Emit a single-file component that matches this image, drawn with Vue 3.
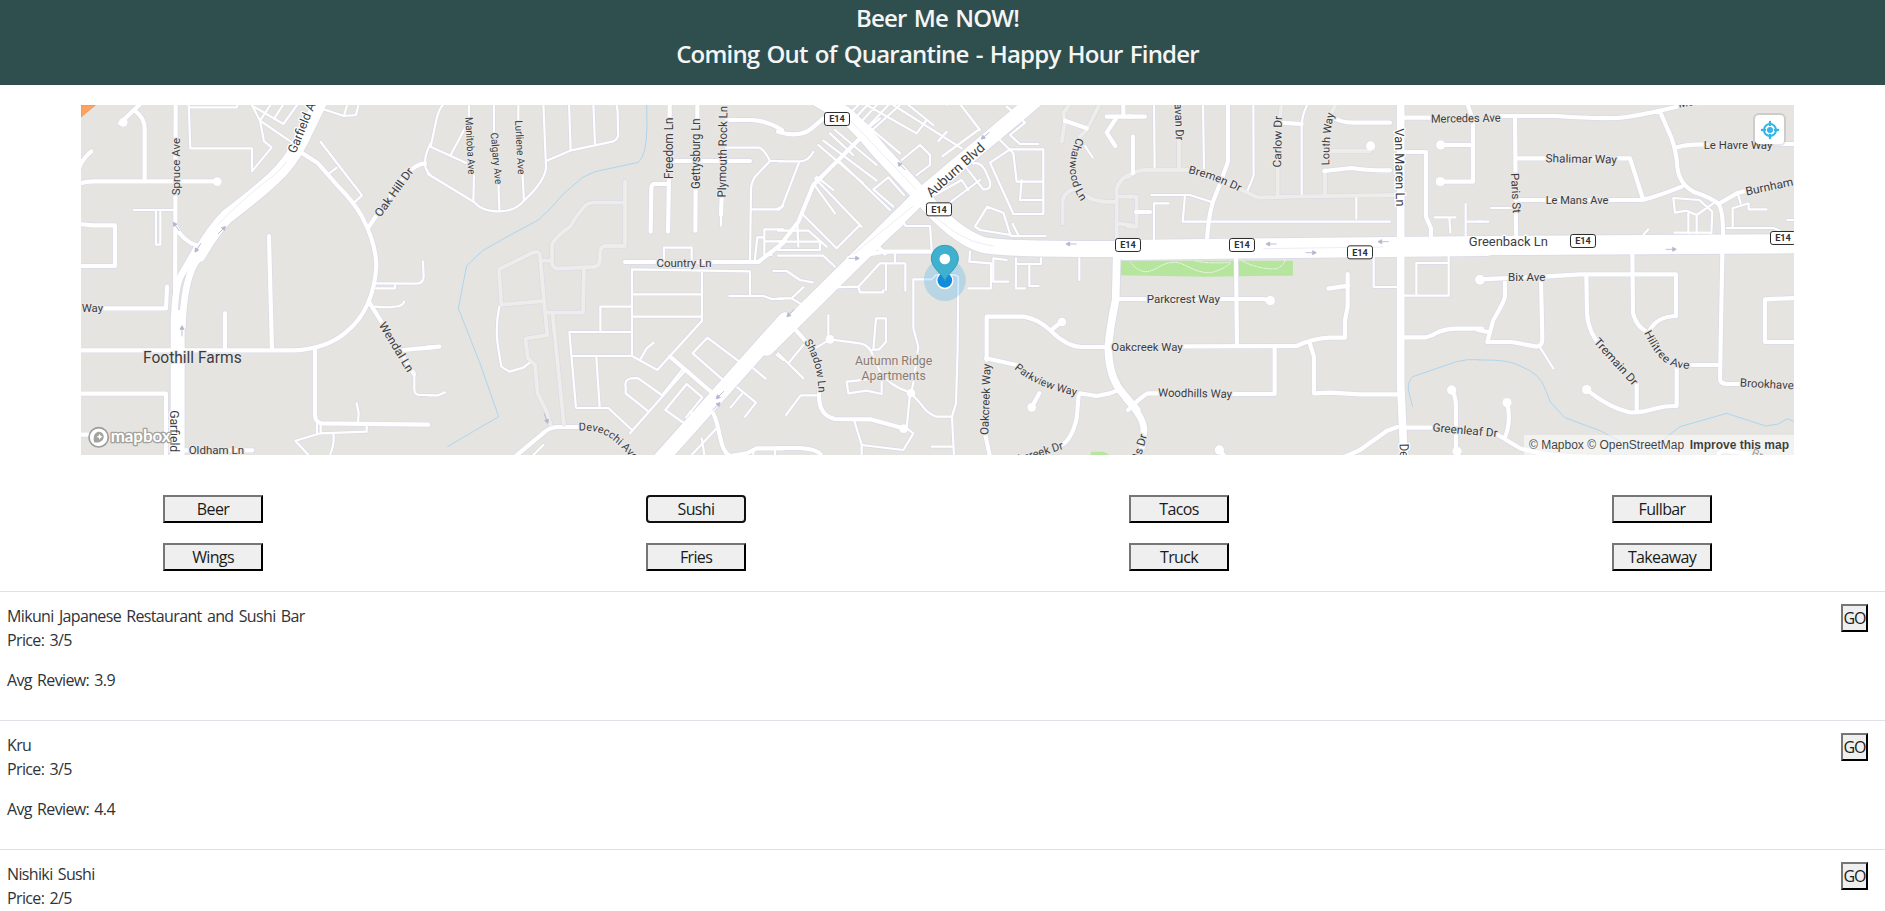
<script setup>
// Each map tile is 350px wide and drawn in a local space of 3 units per pixel.
// Road kinds: p = service lane, s = street, t = private road.
const tiles = [
  {
    roads: [
      ['s', 'M120 70 L185 8 M165 32 Q194 55 194 85 V244 M-6 252 Q15 245 40 244 H412 M-6 215 Q2 180 34 154 M-6 372 L40 376 H105 V498 H-6 M68 625 H258 L261 560 M-6 751 H640 Q740 748 800 695 Q880 630 889 500 Q889 430 846 350 Q820 305 780 265 L712 188 L660 155 M435 751 V640 M576 751 L567 408 M705 748 V945 Q706 968 725 970 L1045 974 M-6 881 H258 V1068 M865 382 Q900 330 950 260 Q1000 190 1035 191 M866 604 L1002 822 M970 750 L1056 742 M-6 1004 H60 M315 1051 H517'],
      ['s', 'M287 8 L285 700'],
      ['p', 'M161 330 H284 M228 330 V434 H241 V332 M326 10 L331 145 H516 V214 L575 142 L552 124 L540 62 L515 14 M326 22 H470 L474 10 M540 62 L640 130 M540 62 L572 14 M522 20 L610 72 L652 14 M585 52 L612 10 M730 28 L792 48 L828 45 L836 12 M792 48 L802 12 M722 126 L846 286 L820 310 M745 222 L770 203 M888 550 L1010 551 Q1030 550 1031 530 L1029 485 M888 565 H945 V552 M885 620 Q970 627 972 605 M1003 822 V870 Q1004 885 1020 885 H1056 M834 966 L836 940 L830 910 M711 970 V998 M722 972 V998 M1035 190 Q1034 165 1052 130 M1035 190 Q1036 212 1052 226 M690 1070 L646 1022 L722 1000 L860 995 V975 M760 1000 Q765 1030 748 1070'],
      ['s', 'M287 380 Q310 425 352 437'],
    ],
    wide: [
      [42, 'M293 1070 V650'],
      [20, 'M283 660 Q285 545 310 515 L350 445 M307 680 Q312 545 345 490 L380 440'],
      [42, 'M357 465 Q400 390 440 350 Q520 290 580 235 Q630 190 665 120 L728 -10'],
      [4, 'M293 751 V740'],
    ],
    dots: [[130, 67, 13], [412, 245, 13]],
    arrows: [[425, 391, -45], [354, 443, 125], [289, 380, -125], [306, 693, -90]],
  },
  {
    roads: [
      ['p', 'M45 8 Q25 25 18 65 L2 140 L110 190 M62 165 L115 65 M117 8 V60 M132 225 L130 306 M192 8 V100 M205 240 L208 333 M265 8 V60 M277 215 L282 302 M-6 222 L132 306 Q155 333 200 334 Q255 336 282 302 Q348 240 348 200 L340 8 M350 182 L420 152 L550 124 Q568 115 564 95 L563 35 Q560 20 560 8 M417 8 L422 152 M490 8 L495 134'],
      ['s', 'M719 8 V60 M717 230 L714 395 M802 8 V60 M797 260 L796 392 M875 290 L873 345 M717 252 H672 Q664 252 664 270 L662 395 M725 183 H960 M585 486 H985 L1060 428 M890 60 H965 Q1010 62 1056 90'],
      ['p', 'M873 340 V377 M888 143 H985 Q1000 143 1020 183 H1060 M1020 183 L975 230 Q963 250 963 270 L960 486 M962 328 H1040 L1060 318 M974 486 L982 412 H1003 V388 H1060 M1003 390 V470 M1003 424 H1060 M1003 465 H1025 M702 486 V443 H785 V486 M606 768 V508 L960 514 V588 M816 512 V662 L682 810 L606 768 H424 M606 583 H816 M606 650 H816 M606 620 H511 V696 M606 696 H418 L438 924 H535 L606 990 M499 772 L509 922 M630 780 L650 745 L671 728 M898 588 H1000 L1025 597 H1060 M1030 513 H1060 M600 1000 L765 812 M695 885 L625 835 Q580 830 587 860 V880 L656 935 M700 880 L760 805 M770 975 L706 930 L770 852 L817 892 L768 952 M780 935 L800 950 M885 845 L788 760 L832 713 L935 790 M970 805 L1007 836 M922 862 L978 908 L945 950 M937 880 L902 922 M1040 765 L1060 780 M208 620 Q195 680 204 740 L214 800 L238 815 L280 803 L300 787 M-6 886 H25 L45 877 M340 1035 L305 1070 M780 1070 L860 985 M815 1015 L824 1070 M1035 1050 V1070 M970 1050 V1070'],
      ['s', 'M720 770 L858 888 M850 940 Q860 960 870 1010 Q880 1060 900 1068 L950 1060 L980 1045 H1060 M-6 743 L28 740 M255 1070 L345 995 Q360 981 390 981 H450'],
      ['t', 'M585 245 V438 H525 Q512 440 510 455 V480 Q508 500 490 501 L380 506 Q366 500 366 485 V435 Q372 415 420 380 Q440 345 465 318 Q475 308 490 308 H585 M330 482 H362 M214 614 L207 508 L310 457 Q328 452 330 465 L342 605 L352 705 L286 716 L294 775 L315 795 L323 880 L350 935 L362 975 M214 614 L340 603 M462 505 L459 638 H352 M368 645 L402 975'],
    ],
    wide: [[46, 'M690 1080 L1066 660']],
    dots: [],
    arrows: [[348, 955, 70], [870, 885, 135], [859, 919, -45]],
  },
  {
    roads: [
      ['p', 'M-6 184 H60 Q85 184 100 155 M56 190 L10 310 Q5 325 -6 330 M235 120 L100 255 M150 100 L220 165 M165 90 L290 195 M115 135 L250 250 M130 122 L290 242 M105 235 L245 380 M180 185 L330 330 M100 250 L165 340 M70 345 L170 445 L240 375 M160 270 L110 230 M280 268 L325 232 L372 285 M280 268 L340 320 M-6 392 H85 L140 440 M55 440 L52 370 M-6 425 H120 V450 H-6 M-6 467 H130 L165 500 M-6 513 H20 L60 540 L98 547 M-6 595 H35 L70 562 M35 595 L60 610 M130 563 L235 560 L300 490 H376 V572 M235 560 L240 577 H310 V570 M318 490 V570 M165 535 L190 530 L245 475 M345 462 V486 M365 362 L378 378 H450 L455 450 M300 385 L332 405 L370 370'],
      ['p', 'M235 15 L205 45 M262 15 L220 60 M290 15 L235 75 M325 15 L255 90 M360 15 L260 105 M225 45 L360 160 M260 15 L410 100 L440 60 M300 55 L270 80 M340 15 L545 145 M385 15 L460 75 M365 180 L420 135 L450 165 V195 L410 225 M500 15 L480 0 M475 123 L500 95 M488 168 L595 90 M580 190 Q600 185 615 210 L630 245 Q635 270 610 268 L560 205 M540 12 L600 90 M650 110 L700 160 L710 245 H790 M630 188 L700 342 H790 V148 H690 L630 188 M720 300 H788 M720 300 L725 240 M690 105 L720 132 H775 M690 105 L735 68 L680 20 M465 285 L545 240 L565 270 M500 315 L600 240 M585 380 L622 320 L670 338 L692 408 H797 M585 380 L600 390 L692 405 M698 372 L715 405'],
      ['s', 'M-6 95 Q60 115 95 85 L130 55 M235 120 L100 255 L55 365 L-6 445 M205 475 L310 455 H455 M275 425 L315 460 M30 675 Q60 700 85 735 M118 870 Q110 945 165 957 L270 958 L370 985 M620 780 V650 H730 Q770 655 810 690 Q860 740 905 741 H985 M618 775 L710 795 M615 1000 L630 1070 M900 880 L950 888 L990 880 L1020 868 M896 885 L890 955 Q875 1020 845 1035 M778 880 L755 922 M812 692 L845 665 M1010 597 H1056 M-6 1044 H60 Q120 1048 125 1070'],
      ['p', 'M145 645 V712 M150 718 L240 730 Q270 735 280 770 L300 815 Q330 860 393 878 M-6 760 L70 835 M70 735 L25 790 M105 745 L150 718 M280 750 L288 655 H318 V725 L298 748 L270 750 M305 845 V882 L260 872 L205 880 L200 845 L265 838 M118 886 H62 L18 945 M222 960 L245 1035 V1070 M245 1035 L370 1050 L400 1000 L380 985 L390 880 M393 878 L400 850 L415 740 L400 685 V538 H455 L468 525 H525 L535 530 L533 740 L528 910 L516 950 H470 Q440 940 425 915 L393 878 M516 950 L522 1070 M455 1040 H520 M570 455 L568 485 L633 490 V565 H565 M640 475 V545 H685 M640 475 L680 480 M708 475 V565 H735 M708 492 H783 V475 M748 495 V558 H776 M898 475 V540'],
      ['t', 'M845 125 L855 65 L850 40 L870 10 M960 10 L920 90 L900 110 M848 370 V300 Q855 270 900 262 M915 285 Q945 310 1010 305 M1010 430 V270 Q1015 235 1056 220 M1010 370 L1056 376 M1010 290 H1056'],
      ['s', 'M855 62 L920 85 M980 50 H1056 M1010 52 L980 98 L1006 138 M1030 10 V50'],
      ['p', 'M915 138 L938 172'],
    ],
    wide: [
      [46, 'M-40 744 L420 290 L778 -10'],
      [48, 'M60 -35 L190 40 Q230 70 300 155 L430 295 Q520 405 610 435 Q690 450 1070 446'],
      [23, 'M1010 470 L1007 600 Q990 680 985 740 Q985 820 1020 870 L1070 930'],
    ],
    dots: [[150, 718, 13], [393, 879, 13], [371, 986, 13], [846, 666, 13], [755, 922, 13]],
    arrows: [[365, 199, -135], [616, 107, 140], [222, 475, 0], [32, 639, 135], [874, 432, 180]],
  },
  {
    roads: [
      ['p', 'M72 10 L74 205 M219 10 L222 205 M370 10 L371 225 Q365 245 352 272 M535 8 Q515 45 515 80 V285 M64 285 H180 L245 306 M165 286 L158 365 H780 M72 420 V310 H116 M679 288 V356 M731 470 V561 H800 M820 587 H956 V470 M859 587 V489 H956 M914 352 H977 M958 352 L961 397 M1007 312 V408 M1007 365 H1056'],
      ['t', 'M-6 232 Q15 210 45 210 H175 L230 220 L385 293 L480 290 L810 285 M147 120 V208 M443 200 V285 M450 50 L455 10 M585 210 V285 M618 10 L600 50 M600 153 H720 M-6 290 H20 V380 H-6'],
      ['s', 'M294 10 V185 Q275 240 255 290 Q237 330 231 420 M450 68 L515 72 M605 50 Q630 68 670 68 H780 M583 213 L665 204 Q710 212 780 211 M820 53 H900 M820 156 H888 V350 L903 385 V408 M932 135 H1028 M932 245 H1029 V60 L1012 10 M-6 50 H45 M9 110 V220 M18 336 H60 M318 480 L321 738 M-6 597 H400 L421 602 M160 739 L500 738 Q550 715 600 713 H645 V660 L653 620 V522 M655 557 L595 566 M434 740 V882 H305 M540 732 L552 770 V880 L600 878 L690 883 H805 M820 712 H885 Q900 710 920 698 Q950 686 980 686 H1056 M820 983 H908 M965 870 Q978 890 978 920 V1050 M-6 930 Q40 885 55 880 H85 M640 1072 L690 1050 L770 993 L802 981 M268 1050 L285 1070'],
    ],
    wide: [
      [60, 'M-20 450 L400 445 L1070 438'],
      [23, 'M812 5 V850 L822 1075'],
      [20, 'M-10 898 Q40 950 42 990 L36 1040'],
    ],
    dots: [[722, 138, 14], [932, 135, 14], [931, 245, 14], [421, 602, 14], [965, 870, 14], [981, 1054, 14], [268, 1050, 14], [1050, 540, 14]],
    arrows: [[424, 432, 180], [543, 458, 0], [760, 425, 180]],
  },
  {
    roads: [
      ['s', 'M60 48 H230 Q330 56 410 54 Q460 52 600 18 M105 48 L108 408 M108 175 H450 L490 300 M120 300 H480 Q510 298 605 260 M540 35 L575 115 Q590 160 592 200 Q596 250 640 275 Q700 295 715 312 Q730 330 729 410 M587 143 Q620 132 680 133 M870 132 H950 M715 312 L775 278 L800 272 M-6 538 L190 530 L300 523 H588 V648 Q530 650 510 690 M75 535 V590 Q70 610 40 660 L22 726 H95 L170 740 Q187 740 187 715 L183 540 M-6 690 L25 696 M319 525 L321 640 Q325 700 365 740 M457 460 L459 640 Q470 680 500 695 M727 460 L720 835 Q720 852 740 852 H780 M635 795 H720 M590 800 V918 Q560 917 530 925 Q480 940 450 937 Q390 925 320 869 M470 850 V935 M950 594 L855 598 V726 H950 M81 908 Q95 960 75 1012 M50 1003 L120 1045 Q200 1070 320 1070'],
      ['p', 'M33 324 H98 M-6 365 H25 M180 742 L220 805 M487 408 L505 388 M585 338 L580 294 L658 300 L697 335 L694 400 M585 338 L620 332 L650 345 L700 310 M625 335 V400 M650 345 V400 M583 398 H692 M775 285 L782 310 M758 383 V325 L806 310 V328 H860 M740 384 H880 L900 392 M922 360 H950'],
      ['s', 'M715 1060 L730 1052 L830 1064 M175 1060 V1075'],
    ],
    wide: [[58, 'M-20 437 L500 434 L960 431']],
    dots: [[0, 539, 14], [81, 908, 14], [320, 869, 14]],
    arrows: [[573, 448, 0]],
  },
]
const widths = { p: 6.5, s: 12.5, t: 11.5 }

const water = [
  [1, 'M650 10 L651 80 Q650 165 625 187 L495 215 L458 232 L400 282 L362 325 L325 360 L250 400 L158 452 L110 497 L85 625 L150 790 L206 950 L52 1040'],
  [3, 'M848 920 L835 870 Q833 845 848 830 L980 785 Q1010 776 1052 779'],
  [4, 'M-4 780 Q90 778 120 798 Q180 820 195 865 L212 908 L255 953 L360 992 L450 1040 L530 1045 L560 1010 L600 980 L740 940 L857 978 L895 972 L922 956 L950 968'],
]

// [tile, text, centre x, centre y, length, angle, font size, style]
const labels = [
  [0, 'Spruce Ave', 287, 200, 172, -90, 33, ''],
  [0, 'Oak Hill Dr', 942, 277, 172, -54, 33, ''],
  [0, 'Wendal Ln', 949, 741, 168, 59, 33, ''],
  [0, 'Way', 37, 625, 64, 0, 33, ''],
  [0, 'Foothill Farms', 337, 774, 296, 0, 46, 'place'],
  [0, 'Oldham Ln', 409, 1050, 166, 0, 33, ''],
  [0, 'Garfield Ave', 284, 1028, 195, 90, 37, 'major'],
  [1, 'Manitoba Ave', 121, 137, 172, 87, 30, ''],
  [1, 'Calgary Ave', 199, 175, 155, 85, 30, ''],
  [1, 'Lurliene Ave', 270, 142, 162, 87, 30, ''],
  [1, 'Freedom Ln', 718, 145, 184, -90, 34, ''],
  [1, 'Gettysburg Ln', 799, 161, 212, -90, 34, ''],
  [1, 'Plymouth Rock Ln', 878, 155, 274, -89, 34, ''],
  [1, 'Country Ln', 762, 490, 165, 0, 33, ''],
  [2, 'Auburn Blvd', 526, 210, 220, -42, 39, 'major'],
  [2, 'Oakcreek Way', 617, 898, 214, -88, 33, ''],
  [2, 'Oakcreek Way', 1101, 741, 214, 0, 33, ''],
  [2, 'Autumn Ridge', 341, 782, 232, 0, 37, 'poi'],
  [2, 'Apartments', 341, 828, 193, 0, 37, 'poi'],
  [2, 'Oakcreek Dr', 762, 1063, 180, -18, 33, ''],
  [3, 'Dunsavan Dr', 146, 28, 186, 88, 33, ''],
  [3, 'Carlow Dr', 443, 125, 154, -89, 33, ''],
  [3, 'Parkcrest Way', 160, 597, 220, 0, 33, ''],
  [3, 'Woodhills Way', 195, 880, 222, 1, 33, ''],
  [3, 'Van Maren Ln', 809, 202, 234, 89, 37, 'major'],
  [3, 'Dewey Dr', 824, 1103, 145, 88, 37, 'major'],
  [3, 'Crosswoods Dr', 7, 1119, 242, -74, 33, ''],
  [3, 'Mercedes Ave', 1007, 55, 209, -1, 33, ''],
  [3, 'Greenleaf Dr', 1005, 991, 196, 5, 33, ''],
  [3, 'Greenback Ln', 1135, 425, 237, 0, 38, 'major'],
  [4, 'Shalimar Way', 304, 177, 214, 1, 33, ''],
  [4, 'Le Mans Ave', 291, 299, 188, 0, 33, ''],
  [4, 'Paris St', 107, 279, 120, 87, 33, ''],
  [4, 'Bix Ave', 140, 532, 112, 0, 33, ''],
  [4, 'Le Havre Way', 774, 134, 206, 0, 33, ''],
  [4, 'Burnham', 868, 260, 145, -12, 33, ''],
  [4, 'Brookhaven', 870, 853, 180, 3, 33, ''],
  [4, 'Tremain Dr', 408, 785, 178, 48, 33, ''],
  [4, 'Br', 832, 1063, 34, 20, 33, ''],
]

// Labels that bend along their street: [tile, text, baseline, length, size, style]
const curved = [
  [0, 'Garfield Ave', 'M647 162 Q680 80 725 -30', 196, 38, 'major'],
  [1, 'Devecchi Ave', 'M446 992 Q512 988 550 1022 Q580 1045 606 1078', 196, 33, ''],
  [2, 'Charwood Ln', 'M891 112 Q843 215 903 304', 203, 33, ''],
  [2, 'Shadow Ln', 'M72 726 Q114 790 115 874', 160, 33, ''],
  [2, 'Parkview Way', 'M702 806 Q770 865 892 888', 206, 33, ''],
  [3, 'Bremen Dr', 'M174 219 Q250 236 327 275', 164, 33, ''],
  [3, 'Louth Way', 'M598 196 Q596 110 612 42', 156, 33, ''],
  [4, 'Hilltree Ave', 'M492 698 Q530 775 560 790 Q590 806 636 807', 186, 33, ''],
  [4, 'Mercedes Ave', 'M597 23 Q700 5 800 0', 205, 33, ''],
]

const shields = [[2, 171, 57], [2, 477, 328], [3, -6, 435], [3, 336, 435], [3, 690, 457], [4, 309, 423], [4, 909, 414]]

const filters = ['Beer', 'Sushi', 'Tacos', 'Fullbar', 'Wings', 'Fries', 'Truck', 'Takeaway']
const venues = [
  { name: 'Mikuni Japanese Restaurant and Sushi Bar', price: 3, review: '3.9' },
  { name: 'Kru', price: 3, review: '4.4' },
  { name: 'Nishiki Sushi', price: 2, review: '' },
]
const place = (i) => `translate(${80 + i * 350} 100) scale(.333333)`
</script>

<template>
  <div class="page">
    <header class="banner">
      <h1>Beer Me NOW!</h1>
      <h1>Coming Out of Quarantine - Happy Hour Finder</h1>
    </header>

    <div class="map">
      <svg class="canvas" viewBox="81 105 1713 350" width="1713" height="350">
        <rect x="81" y="105" width="1713" height="350" fill="#e5e4e0" />
        <path d="M81 105 H95.500 L81 117 Z" fill="#ffa35c" stroke="#f1813c" stroke-width=".6" />
        <g :transform="place(3)">
          <path d="M-27 482 H489 V527 H420 L230 530 L-27 526 Z M-90 1072 L-120 1066 L-115 1055 L-80 1055 L-65 1062 V1072 Z" fill="#b6e59e" />
          <path class="trail" d="M0 485 Q20 512 45 515 C80 515 90 487 135 487 C165 487 190 519 240 518 Q275 512 303 488 M195 482 Q225 492 302 487 M335 482 Q390 510 440 506 Q460 498 467 477" />
        </g>
        <path v-for="(w, i) in water" :key="'w' + i" :transform="place(w[0])" :d="w[1]" class="water" />

        <g v-for="(t, i) in tiles" :key="'c' + i" :transform="place(i)" class="casing">
          <path v-for="(r, k) in t.roads" :key="k" :d="r[1]" :stroke-width="widths[r[0]] + 4" />
          <path v-for="(r, k) in t.wide" :key="'m' + k" :d="r[1]" :stroke-width="r[0] + 5" />
          <circle v-for="(d, k) in t.dots" :key="'d' + k" :cx="d[0]" :cy="d[1]" :r="d[2] - 4" stroke-width="11" />
        </g>
        <g v-for="(t, i) in tiles" :key="'f' + i" :transform="place(i)" class="fill">
          <path v-for="(r, k) in t.roads" :key="k" :d="r[1]" :class="{ private: r[0] === 't' }" :stroke-width="widths[r[0]]" />
        </g>
        <g v-for="(t, i) in tiles" :key="'h' + i" :transform="place(i)" class="fill">
          <path v-for="(r, k) in t.wide" :key="k" :d="r[1]" :stroke-width="r[0]" />
          <circle v-for="(d, k) in t.dots" :key="'d' + k" :cx="d[0]" :cy="d[1]" :r="d[2]" />
          <path v-for="(a, k) in t.arrows" :key="'a' + k" class="arrow" :transform="`translate(${a[0]} ${a[1]}) rotate(${a[2]})`" d="M-16 0 H6 M5 -6 L16 0 L5 6 Z" />
        </g>
        <g class="median">
          <path :transform="place(0)" d="M412 375 Q500 285 590 220 L620 185" />
          <path :transform="place(2)" d="M210 60 L410 270 M435 330 Q480 360 520 393 Q575 430 640 438 M220 463 L400 318" />
          <path :transform="place(3)" d="M400 446 L760 441" />
        </g>

        <g v-for="(l, i) in labels" :key="'l' + i" :transform="place(l[0])">
          <text class="label" :class="l[7]" text-anchor="middle" :font-size="l[6] * 1.05" :textLength="l[4]" lengthAdjust="spacingAndGlyphs" :transform="`translate(${l[2]} ${l[3]}) rotate(${l[5]})`" :y="l[6] * 0.35">{{ l[1] }}</text>
        </g>
        <g v-for="(c, i) in curved" :key="'t' + i" :transform="place(c[0])">
          <path :id="'street' + i" :d="c[2]" fill="none" />
          <text class="label" :class="c[5]" :font-size="c[4]"><textPath :href="'#street' + i" :textLength="c[3]" lengthAdjust="spacingAndGlyphs">{{ c[1] }}</textPath></text>
        </g>
        <g v-for="(s, i) in shields" :key="'s' + i" :transform="place(s[0])">
          <g :transform="`translate(${s[1]} ${s[2]})`">
            <rect x="-37.500" y="-19.500" width="75" height="39" rx="7" fill="#fff" stroke="#2b2b2b" stroke-width="3" />
            <text class="shield" text-anchor="middle" y="10" textLength="47" lengthAdjust="spacingAndGlyphs">E14</text>
          </g>
        </g>

        <g :transform="place(2)">
          <circle cx="494.500" cy="540" r="63" fill="#1da1f2" fill-opacity=".22" />
          <circle cx="494.500" cy="542" r="26" fill="#fff" />
          <circle cx="494.500" cy="541" r="22" fill="#118bdd" />
          <path d="M494.500 543 C490 524 455 505 454 477 C454 452 472 436 494.500 436 C517 436 535 452 535 477 C534 505 499 524 494.500 543 Z" fill="#3fb1ce" stroke="#329bb8" stroke-width="3" />
          <circle cx="494.500" cy="477" r="16" fill="#fff" />
        </g>

        <g :transform="place(0)" class="logo">
          <circle cx="56" cy="1012" r="29" fill="#fff" stroke="#9c9c9a" stroke-width="5" />
          <path d="M42 1027 C38 1004 48 994 58 995 C72 997 75 1012 67 1021 C60 1029 50 1028 42 1027 Z" fill="#a3a39f" />
          <path d="M59 1001 L62 1007 L68 1010 L62 1013 L59 1019 L56 1013 L50 1010 L56 1007 Z" fill="#fff" />
          <text x="92" y="1026" textLength="180" lengthAdjust="spacingAndGlyphs">mapbox</text>
        </g>
      </svg>
      <button class="locate" aria-label="Find my location">
        <svg viewBox="0 0 20 20" width="20" height="20">
          <circle cx="10" cy="10" r="6" fill="none" stroke="#33b5e5" stroke-width="2" />
          <path d="M10 2 V5 M10 15 V18 M2 10 H5 M15 10 H18" stroke="#33b5e5" stroke-width="2.4" stroke-linecap="round" />
          <circle cx="10" cy="10" r="3" fill="#33b5e5" />
        </svg>
      </button>
      <div class="credit">
        <span>© Mapbox</span><span>© OpenStreetMap</span><b>Improve this map</b>
      </div>
    </div>

    <div class="filters">
      <div v-for="f in filters" :key="f" class="cell">
        <button class="btn" :class="{ focused: f === 'Sushi' }">{{ f }}</button>
      </div>
    </div>

    <section class="results">
      <article v-for="v in venues" :key="v.name" class="venue">
        <div class="info">
          <div>{{ v.name }}</div>
          <p>Price: {{ v.price }}/5</p>
          <p v-if="v.review">Avg Review: {{ v.review }}</p>
        </div>
        <button class="btn go">GO</button>
      </article>
    </section>
  </div>
</template>

<style>
html, body { margin: 0; overflow: hidden; background: #fff; }
</style>

<style scoped>
.page {
  height: 911px;
  overflow: hidden;
  color: #2f3337;
  font: 16px/24px "Open Sans", "Noto Sans", sans-serif;
  letter-spacing: -0.64px;
  word-spacing: 1.7px;
}
.banner {
  box-sizing: border-box;
  height: 85px;
  background: #2f4f4f;
  color: #f5f5f5;
  text-align: center;
  padding-right: 10px;
}
h1 {
  margin: 0;
  font-size: 24px;
  line-height: 36px;
  font-weight: 600;
  letter-spacing: -0.8px;
}
.map {
  position: relative;
  width: 1713px;
  height: 350px;
  margin: 20px 0 0 81px;
  word-spacing: 0;
}
.canvas { display: block; overflow: hidden; }
.casing { fill: none; stroke: #d9dae7; stroke-linecap: round; stroke-linejoin: round; }
.casing circle { fill: #d9dae7; }
.fill path { fill: none; stroke: #fff; stroke-linecap: round; stroke-linejoin: round; }
.fill circle { fill: #fff; }
.fill .private { stroke: #eeedea; }
.fill .arrow { stroke: #b3b6cf; stroke-width: 2.5; fill: #b3b6cf; stroke-linecap: butt; stroke-linejoin: miter; }
.median path { fill: none; stroke: #dcdde9; stroke-width: 1.6; }
.trail { fill: none; stroke: #f2f7ef; stroke-width: 3; stroke-dasharray: 5 2; }
.water { fill: none; stroke: #a6d2f0; stroke-width: 2.6; }
.label {
  font-family: Roboto, sans-serif;
  letter-spacing: 0;
  fill: #3b3c42;
  stroke: #e9e8e6;
  stroke-width: 8;
  stroke-linejoin: round;
  paint-order: stroke;
}
.major { stroke: #fff; }
.place { stroke-width: 6; }
.poi { fill: #8e7b70; }
.shield { font: 700 28px Roboto, sans-serif; letter-spacing: 0; fill: #2f2f2f; }
.logo text {
  font: 700 50px Lato, sans-serif;
  letter-spacing: 0;
  fill: #fff;
  stroke: #a2a29f;
  stroke-width: 8;
  stroke-linejoin: round;
  paint-order: stroke;
}
.locate {
  position: absolute;
  top: 10px;
  right: 10px;
  display: flex;
  align-items: center;
  justify-content: center;
  width: 29px;
  height: 29px;
  padding: 0;
  border: 0;
  border-radius: 4px;
  background: #fff;
  box-shadow: 0 0 0 2px rgba(0, 0, 0, 0.1);
}
.credit {
  position: absolute;
  right: 0;
  bottom: 0;
  display: flex;
  justify-content: space-between;
  box-sizing: border-box;
  width: 270px;
  padding: 0 5px;
  background: rgba(255, 255, 255, 0.5);
  color: rgba(0, 0, 0, 0.75);
  font: 12px/20px "Liberation Sans", Arial, sans-serif;
  letter-spacing: 0;
  white-space: nowrap;
}
.credit b { margin-left: 2px; }
.filters {
  display: grid;
  grid-template-columns: repeat(4, 483px);
  row-gap: 20px;
  padding: 40px 0 20px 163px;
  width: 1722px;
  box-sizing: border-box;
}
.cell { height: 28px; }
.btn {
  display: block;
  box-sizing: border-box;
  width: 100px;
  height: 28px;
  padding: 0;
  border: 2px outset #767676;
  border-color: #767676 #212121 #212121 #767676;
  border-radius: 0;
  background: #efefef;
  color: #1a1a1a;
  font: inherit;
  letter-spacing: inherit;
}
.btn.focused { border: 2px solid #101010; border-radius: 4px; }
.venue {
  display: flex;
  justify-content: space-between;
  box-sizing: border-box;
  height: 129px;
  padding: 12px 17px 12px 7px;
  border-top: 1px solid #dee2e6;
}
.venue p { margin: 0 0 16px; }
.btn.go { width: 27px; letter-spacing: -1px; }
</style>
